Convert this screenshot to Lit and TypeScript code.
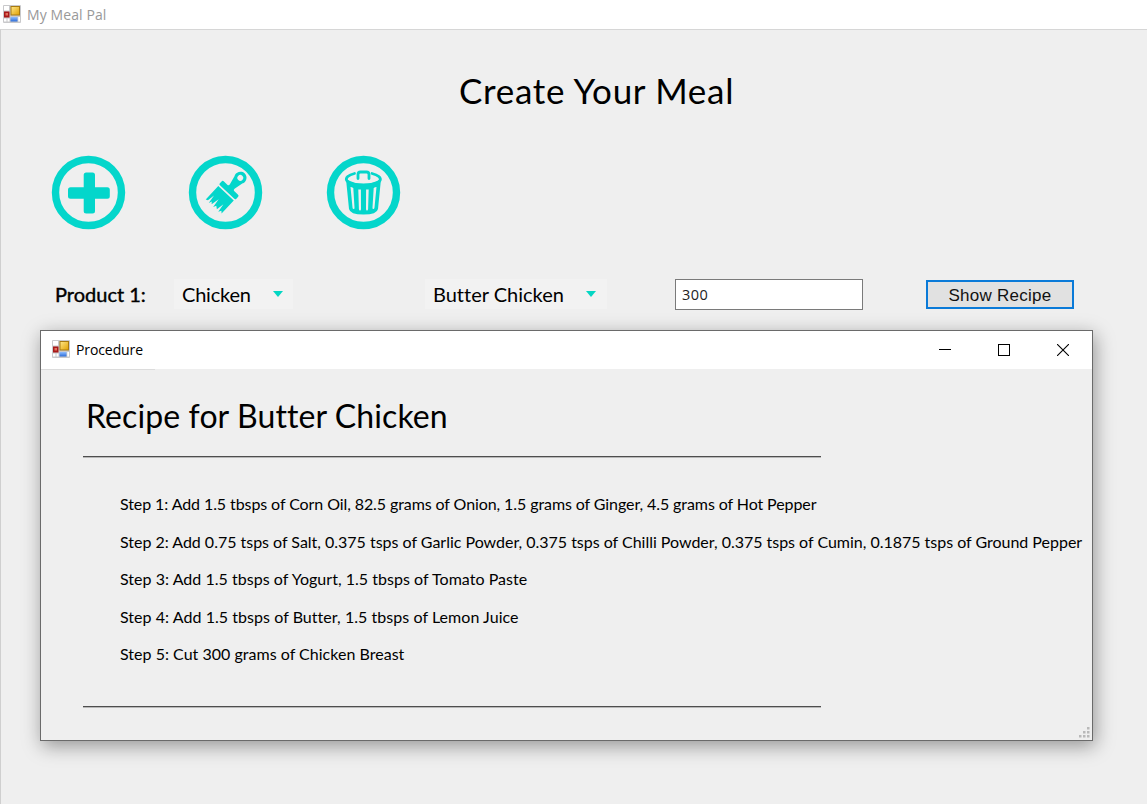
import { LitElement, html, css, svg } from "lit";
import { customElement } from "lit/decorators.js";

const formIcon = html`<svg class="form-icon" width="18" height="18" viewBox="0 0 18 18">
  <defs>
    <linearGradient id="gold" x1="0" y1="0" x2="1" y2="1"><stop offset="0" stop-color="#ffe88a" /><stop offset="1" stop-color="#e0a000" /></linearGradient>
    <linearGradient id="blue" x1="0" y1="0" x2="0" y2="1"><stop offset="0" stop-color="#8dbcff" /><stop offset="1" stop-color="#2c6cd8" /></linearGradient>
  </defs>
  <rect width="18" height="18" rx="1" fill="#c9c9cb" />
  <rect x="1" y="1" width="5" height="4.5" fill="#fff" />
  <rect x="1" y="13.5" width="2.5" height="3" fill="#fff" /><rect x="4.5" y="13.5" width="2" height="3" fill="#fff" />
  <rect x="1" y="6.5" width="5.5" height="6" fill="#a81818" /><rect x="2.5" y="8" width="2.5" height="2.5" fill="#e0705c" />
  <rect x="8" y="1.5" width="8.5" height="8.5" fill="url(#gold)" stroke="#a87a10" />
  <rect x="7.5" y="12" width="7" height="4.5" fill="url(#blue)" />
  <rect x="15.3" y="12" width="1.7" height="4.5" fill="#fff" />
</svg>`;

const ring = svg`<circle cx="37.5" cy="37.5" r="33" fill="none" stroke="#04d6cb" stroke-width="7.4" />`;

const steps = [
  { cls: "s1", text: "Step 1: Add 1.5 tbsps of Corn Oil, 82.5 grams of Onion, 1.5 grams of Ginger, 4.5 grams of Hot Pepper" },
  { cls: "s2", text: "Step 2: Add 0.75 tsps of Salt, 0.375 tsps of Garlic Powder, 0.375 tsps of Chilli Powder, 0.375 tsps of Cumin, 0.1875 tsps of Ground Pepper" },
  { cls: "s3", text: "Step 3: Add 1.5 tbsps of Yogurt, 1.5 tbsps of Tomato Paste" },
  { cls: "s4", text: "Step 4: Add 1.5 tbsps of Butter, 1.5 tbsps of Lemon Juice" },
  { cls: "s5", text: "Step 5: Cut 300 grams of Chicken Breast" },
];

@customElement("procedure-window")
export class ProcedureWindow extends LitElement {
  static styles = css`
    :host { display: block; box-sizing: border-box; border: 1px solid #6a6a6a; background: #efefef; color: #000; font-family: "Comic Sans MS", Lato, sans-serif; font-variant-ligatures: none; }
    .bar { height: 38px; background: #fff; display: flex; align-items: center; padding-left: 11px; font: 14px/20px "Open Sans", sans-serif; }
    .form-icon { margin-right: 6px; position: relative; top: -1px; }
    .caption { flex: 1; letter-spacing: -0.1px; }
    .controls { display: flex; width: 176px; }
    .control { flex: 1; display: flex; justify-content: center; }
    .seam { width: 114px; height: 1px; background: #dcdcdc; }
    .heading { margin: 24px 0 0 45px; font-size: 32px; line-height: 44px; font-weight: 400; white-space: nowrap; letter-spacing: 0.1px; }
    .rule { width: 738px; height: 1px; margin-left: 42px; background: #4e4e4e; box-shadow: 0 1px 0 #b8b8b8; }
    .first { margin-top: 18px; }
    .steps { list-style: none; margin: 28px 0 0 79px; padding: 0; height: 221px; white-space: nowrap; font-size: 16px; line-height: 37.5px; }
    .s1 { letter-spacing: -0.09px; }
    .s2 { letter-spacing: -0.014px; }
    .s3 { letter-spacing: 0.035px; }
    .s4 { letter-spacing: 0.05px; }
    .s5 { letter-spacing: 0.02px; }
    .grip { position: absolute; right: 2px; bottom: 2px; }
  `;
  render() {
    return html`
      <div class="bar">${formIcon}<span class="caption">Procedure</span>
        <div class="controls">
          <div class="control"><svg width="12" height="12" shape-rendering="crispEdges"><path d="M0 5.5h12" stroke="#000" /></svg></div>
          <div class="control"><svg width="12" height="12" shape-rendering="crispEdges"><rect x=".5" y=".5" width="11" height="11" fill="none" stroke="#000" /></svg></div>
          <div class="control"><svg width="12" height="12"><path d="M0 0L12 12M12 0L0 12" stroke="#000" stroke-width="1.1" /></svg></div>
        </div>
      </div>
      <div class="seam"></div>
      <h2 class="heading">Recipe for Butter Chicken</h2>
      <div class="rule first"></div>
      <ul class="steps">${steps.map((s) => html`<li><span class=${s.cls}>${s.text}</span></li>`)}</ul>
      <div class="rule"></div>
      <svg class="grip" width="11" height="11" fill="#b9b9b9"><path d="M8 0h2.5v2.5H8zM4 4h2.5v2.5H4zM8 4h2.5v2.5H8zM0 8h2.5v2.5H0zM4 8h2.5v2.5H4zM8 8h2.5v2.5H8z" /></svg>
    `;
  }
}

@customElement("app-root")
export class AppRoot extends LitElement {
  static styles = css`
    :host { display: block; position: relative; box-sizing: border-box; width: 1147px; height: 804px; overflow: hidden; background: #efefef; color: #000; font-family: "Comic Sans MS", Lato, sans-serif; font-variant-ligatures: none; }
    .bar { height: 29px; background: #fff; display: flex; align-items: center; padding-left: 3px; color: #999; font: 14px/20px "Open Sans", sans-serif; letter-spacing: 0.1px; }
    .form-icon { margin-right: 6px; position: relative; top: -1px; }
    .body { box-sizing: border-box; height: 775px; border-top: 1px solid #d6d6d6; border-left: 1px solid #cfcfcf; }
    .title { margin: 36px 0 0 458px; font-size: 35px; line-height: 48px; font-weight: 400; white-space: nowrap; letter-spacing: 0.7px; }
    .actions { display: flex; gap: 62.3px; margin: 41px 0 0 50px; }
    .row { display: flex; align-items: center; height: 32px; margin-top: 48px; font-size: 20px; white-space: nowrap; }
    .label { width: 119px; padding-left: 54px; -webkit-text-stroke: 0.4px #000; }
    .select { box-sizing: border-box; height: 30px; background: #f2f2f2; display: flex; align-items: center; justify-content: space-between; padding: 0 10px 0 8px; }
    .kind { width: 119px; }
    .kind-text { letter-spacing: -0.2px; }
    .dish { width: 182px; margin-left: 132px; padding-right: 11px; }
    .field { box-sizing: border-box; width: 188px; height: 31px; margin-left: 68px; border: 1.5px solid #7a7a7a; background: #fff; color: #222; padding-left: 6px; font: 14.5px/30px "Open Sans", sans-serif; letter-spacing: 0.5px; }
    .show { box-sizing: border-box; width: 148px; height: 29px; margin-left: 63px; padding: 2px 0 0; border: 2px solid #0a7ad8; background: #e1e1e1; color: #111; font: 17px/23px "Liberation Sans", sans-serif; letter-spacing: 0.25px; }
    .dialog { position: absolute; left: 40px; top: 330px; width: 1053px; height: 411px; box-shadow: 2px 5px 18px rgba(0, 0, 0, 0.38); }
  `;
  render() {
    return html`
      <div class="bar">${formIcon}<span class="caption">My Meal Pal</span></div>
      <div class="body">
        <h1 class="title">Create Your Meal</h1>
        <div class="actions">
          <svg width="75" height="75">${ring}<path d="M35.200 17.500h6.300a2.500 2.500 0 0 1 2.500 2.500v12.300h12.300a2.500 2.500 0 0 1 2.500 2.500v6.500a2.500 2.500 0 0 1-2.500 2.500H44v12.300a2.500 2.500 0 0 1-2.500 2.500h-6.300a2.500 2.500 0 0 1-2.500-2.500V43.800H19.500a2.500 2.500 0 0 1-2.500-2.500v-6.500a2.500 2.500 0 0 1 2.500-2.500h13.200V20a2.500 2.500 0 0 1 2.500-2.500z" fill="#04d6cb" /></svg>
          <svg width="75" height="75">${ring}
            <g transform="translate(39.800 36.300) rotate(43)" fill="#04d6cb">
              <path fill-rule="evenodd" d="M-9.800 1q-1.500 0-1.500-1.500v-2.500q0-1.500 1.500-1.500h5.300q1.500 0 1.300-2L-5.300-15.500a6.100 6.100 0 1 1 10.600 0L3.200-6.500q-.2 2 1.300 2h5.300q1.500 0 1.500 1.500v2.500q0 1.500-1.500 1.500zM2.900-18.300a2.900 2.900 0 1 0-5.800 0a2.900 2.900 0 1 0 5.800 0z" />
              <path d="M-10.600 2.600H10.600V20.500L8.500 18.500 7 21.500 5.700 12.500 4.200 20.500 1.500 18.500 0 21.500-1.300 12-3 20.500-4.700 18.500-6 21.500-7.200 12.500-8.500 20-10.600 21z" />
            </g>
          </svg>
          <svg width="75" height="75">${ring}
            <g fill="none" stroke="#04d6cb" stroke-width="2.800" stroke-linecap="round">
              <path d="M28.500 18.500C16 21.500 17 30 37.500 30s21-8.500 8.500-11.500" />
              <path d="M32 23.500v-4q0-2.500 2.500-2.500h6q2.500 0 2.500 2.500v4" />
            </g>
            <path fill="#04d6cb" fill-rule="evenodd" d="M20 24Q37.500 34 55 24L52 54Q51 59.500 37.500 59.500T23 54zM24.500 32l2 20.500q.2 1.500 1.200 1.500t.8-1.500L27.300 33q-1.500-1-2.800-1zM32.300 34.500l.6 19.500q.1 1.500 1.100 1.500t1-1.500L34.900 34.500zM40.100 34.500L40 54q0 1.500 1 1.500t1.100-1.500l.6-19.500zM47.700 33L46.500 52.500q-.2 1.500.8 1.500t1.200-1.500l2-20.500q-1.500 0-2.800 1z" />
          </svg>
        </div>
        <div class="row">
          <span class="label">Product 1:</span>
          <div class="select kind"><span class="kind-text">Chicken</span><svg width="10" height="6"><path d="M0 0h10L5 6z" fill="#04d6c3" /></svg></div>
          <div class="select dish"><span class="dish-text">Butter Chicken</span><svg width="10" height="6"><path d="M0 0h10L5 6z" fill="#04d6c3" /></svg></div>
          <div class="field">300</div>
          <button class="show">Show Recipe</button>
        </div>
      </div>
      <procedure-window class="dialog"></procedure-window>
    `;
  }
}
